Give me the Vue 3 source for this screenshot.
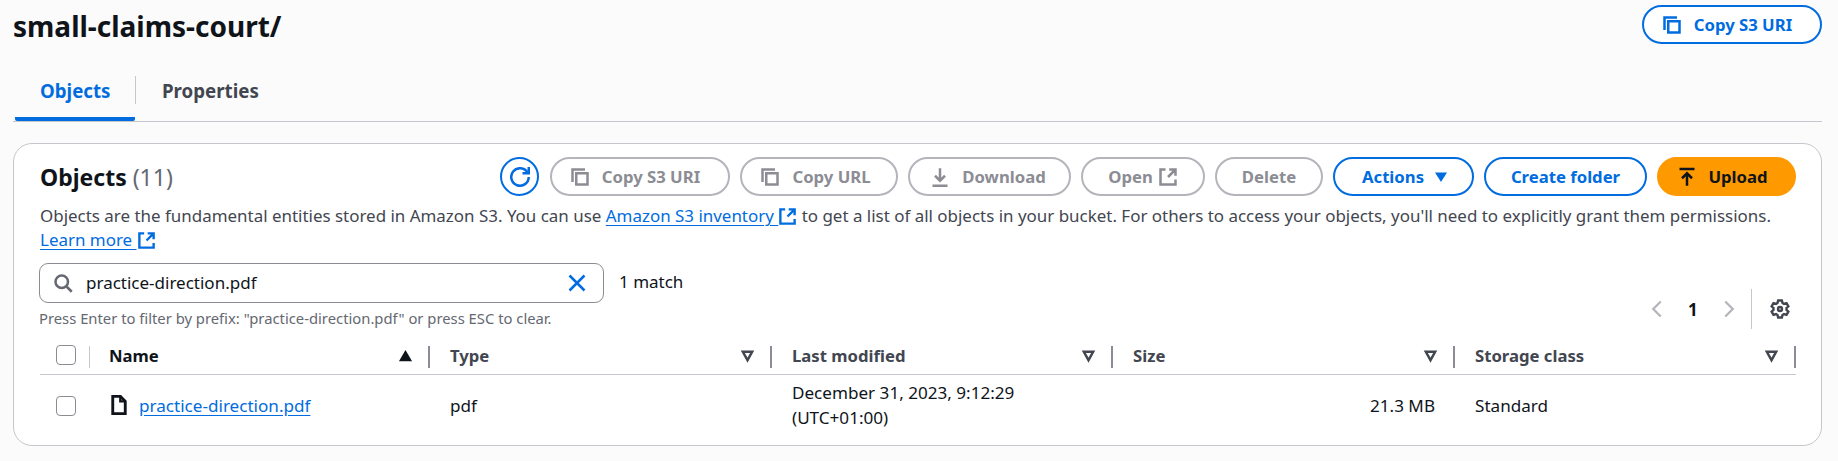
<script setup>
const columns = [
  { name: 'Name', sorted: true },
  { name: 'Type' },
  { name: 'Last modified' },
  { name: 'Size' },
  { name: 'Storage class' }
]
</script>

<template>
  <div class="page">
    <header class="top">
      <h1 class="title">small-claims-court/</h1>
      <button class="btn primary-outline top-copy s3">
        <svg class="ic" viewBox="0 0 16 16"><path d="M2 12V2h10" /><rect x="5" y="5" width="9" height="9" /></svg>
        Copy S3 URI
      </button>
    </header>

    <nav class="tabs">
      <div class="tab active"><span>Objects</span></div>
      <div class="tab"><span>Properties</span></div>
    </nav>

    <section class="card">
      <div class="card-head">
        <h2 class="heading">Objects <span class="count">(11)</span></h2>
        <div class="actions">
          <button class="btn primary-outline round">
            <svg class="ic" viewBox="0 0 16 16"><path d="M10 5h5V0" /><path d="M15 8a7 7 0 1 1-1.1-3.8L15 5" /></svg>
          </button>
          <button class="btn disabled w180 s3">
            <svg class="ic" viewBox="0 0 16 16"><path d="M2 12V2h10" /><rect x="5" y="5" width="9" height="9" /></svg>
            Copy S3 URI
          </button>
          <button class="btn disabled w158 url">
            <svg class="ic" viewBox="0 0 16 16"><path d="M2 12V2h10" /><rect x="5" y="5" width="9" height="9" /></svg>
            Copy URL
          </button>
          <button class="btn disabled w163 dl">
            <svg class="ic" viewBox="0 0 16 16"><path d="M8 1v10M4 7l4 4 4-4M2 15h12" /></svg>
            Download
          </button>
          <button class="btn disabled w124 tight">
            Open
            <svg class="ic" viewBox="0 0 16 16"><path d="M6 2H2v12h12v-4M9 2h5v5M14 2L8 8" /></svg>
          </button>
          <button class="btn disabled w108">Delete</button>
          <button class="btn primary-outline w141 act">
            Actions
            <svg class="caret" viewBox="0 0 16 16"><path d="M2 3.5h12L8 13z" /></svg>
          </button>
          <button class="btn primary-outline w163">Create folder</button>
          <button class="btn upload w139">
            <svg class="ic" viewBox="0 0 16 16"><path d="M2 1.5h12M8 15V5M4 9l4-4 4 4" /></svg>
            Upload
          </button>
        </div>
      </div>

      <p class="desc">
        Objects are the fundamental entities stored in Amazon S3. You can use
        <a class="link">Amazon S3 inventory&nbsp;</a><svg class="ic link-ic" viewBox="0 0 16 16"><path d="M6 2H2v12h12v-4M9 2h5v5M14 2L8 8" /></svg>
        to get a list of all objects in your bucket. For others to access your objects, you'll need to explicitly grant them permissions.
        <br />
        <a class="link">Learn more&nbsp;</a><svg class="ic link-ic" viewBox="0 0 16 16"><path d="M6 2H2v12h12v-4M9 2h5v5M14 2L8 8" /></svg>
      </p>

      <div class="filter-row">
        <div class="filter-left">
          <div class="search-line">
            <div class="search">
              <svg class="ic search-ic" viewBox="0 0 16 16"><circle cx="7" cy="7" r="5" /><path d="M11 11l4 4" /></svg>
              <span class="search-text">practice-direction.pdf</span>
              <svg class="ic clear-ic" viewBox="0 0 16 16"><path d="M2 2l12 12M14 2L2 14" /></svg>
            </div>
            <span class="match">1 match</span>
          </div>
          <div class="hint">Press Enter to filter by prefix: "practice-direction.pdf" or press ESC to clear.</div>
        </div>
        <div class="pager">
          <svg class="ic chev" viewBox="0 0 16 16"><path d="M11 2L5 8l6 6" /></svg>
          <span class="page-num">1</span>
          <svg class="ic chev" viewBox="0 0 16 16"><path d="M5 2l6 6-6 6" /></svg>
          <span class="pager-sep"></span>
          <svg class="ic gear" viewBox="0 0 16 16">
            <path d="M6.5 1.2h3l.5 2 1.2.7 2-.6 1.5 2.6-1.5 1.4v1.4l1.5 1.4-1.5 2.6-2-.6-1.2.7-.5 2h-3l-.5-2-1.2-.7-2 .6-1.5-2.6 1.5-1.4V7.3L1.3 5.9l1.5-2.6 2 .6L6 3.2z" />
            <circle cx="8" cy="8" r="1.6" />
          </svg>
        </div>
      </div>

      <div class="table">
        <div class="th check-cell">
          <span class="checkbox"></span>
          <span class="sep light"></span>
        </div>
        <div v-for="col in columns" :key="col.name" class="th" :class="{ strong: col.sorted }">
          <span>{{ col.name }}</span>
          <svg v-if="col.sorted" class="sort" viewBox="0 0 16 16"><path class="solid" d="M1 14L8 2l7 12z" /></svg>
          <svg v-else class="sort" viewBox="0 0 16 16"><path d="M3 4h10L8 13z" /></svg>
          <span class="sep"></span>
        </div>

        <div class="td check-cell"><span class="checkbox"></span></div>
        <div class="td name-cell">
          <svg class="ic file" viewBox="0 0 16 16"><path d="M9 1H3v14h10V5z" /><path class="fold" d="M9 1v4h4" /></svg>
          <a class="link">practice-direction.pdf</a>
        </div>
        <div class="td">pdf</div>
        <div class="td">December 31, 2023, 9:12:29<br />(UTC+01:00)</div>
        <div class="td right">21.3 MB</div>
        <div class="td">Standard</div>
      </div>
    </section>
  </div>
</template>

<style>
html, body { margin: 0; background: #fbfbfb; }
</style>

<style scoped>
.page {
  box-sizing: border-box;
  width: 1838px;
  height: 461px;
  padding: 0 16px 0 13px;
  font-family: "Noto Sans", sans-serif;
  font-size: 17px;
  color: #0f141a;
  overflow: hidden;
}
.top {
  display: flex;
  justify-content: space-between;
  align-items: flex-start;
  height: 76px;
}
.title {
  margin: 8px 0 0;
  font-size: 28px;
  line-height: 36px;
  font-weight: 700;
}
.btn {
  box-sizing: border-box;
  height: 39px;
  display: inline-flex;
  align-items: center;
  justify-content: center;
  gap: 10px;
  padding: 0;
  border-radius: 20px;
  border: 2px solid #006ce0;
  background: #fff;
  color: #006ce0;
  font-family: inherit;
  font-size: 16.7px;
  font-weight: 700;
}
.tight { gap: 5px; }
.s3 { gap: 12px; padding-right: 10px; }
.url { gap: 12px; padding-right: 7px; }
.dl { gap: 12px; padding-right: 3px; }
.act { padding-left: 4px; }
.top-copy { width: 180px; margin-top: 5px; }
.primary-outline { border-color: #006ce0; }
.round { width: 39px; border-radius: 50%; margin-right: 1px; }
.disabled { border-color: #b4b4bb; color: #8c8c94; }
.upload { background: #ff9900; border-color: #ff9900; color: #0f141a; padding-right: 8px; gap: 11px; }
.w180 { width: 180px; }
.w158 { width: 158px; }
.w163 { width: 163px; }
.w124 { width: 124px; }
.w108 { width: 108px; }
.w141 { width: 141px; }
.w139 { width: 139px; }

.ic {
  width: 20px;
  height: 20px;
  flex: none;
  fill: none;
  stroke: currentColor;
  stroke-width: 2;
}
.caret { width: 16px; height: 16px; fill: currentColor; margin-left: -1px; }

.tabs {
  display: flex;
  height: 45px;
  border-bottom: 1px solid #c6c6cd;
}
.tab {
  position: relative;
  box-sizing: border-box;
  padding: 0 26px 0 27px;
  font-weight: 700;
  font-size: 18.7px;
  line-height: 30px;
  color: #424650;
}
.tab span { display: block; }
.tab.active {
  color: #006ce0;
  width: 120px;
  margin-left: 2px;
  padding-left: 25px;
  border-bottom: 4px solid #006ce0;
  height: 45px;
  border-radius: 0 0 2px 2px;
}
.tab.active::after {
  content: "";
  position: absolute;
  right: -1px;
  top: 0;
  bottom: 13px;
  width: 1px;
  background: #c6c6cd;
}

.card {
  box-sizing: border-box;
  height: 303px;
  margin-top: 21px;
  padding: 13px 25px 0 26px;
  background: #fff;
  border: 1px solid #c6c6cd;
  border-radius: 19px;
}
.card-head {
  display: flex;
  justify-content: space-between;
  align-items: center;
}
.heading {
  margin: 0;
  font-size: 23px;
  font-weight: 700;
}
.count { font-weight: 400; color: #656871; }
.actions { display: flex; gap: 10px; }

.desc {
  margin: 8px 0 0;
  font-size: 16.95px;
  line-height: 24px;
  color: #424650;
}
.desc .ic { width: 19px; height: 19px; vertical-align: -4px; }
.link {
  color: #006ce0;
  text-decoration: underline;
  text-underline-offset: 3px;
}
.link-ic { color: #006ce0; }

.filter-row {
  display: flex;
  justify-content: space-between;
  margin-top: 11px;
}
.search-line { display: flex; align-items: center; gap: 15px; margin-left: -1px; }
.search {
  box-sizing: border-box;
  width: 565px;
  height: 40px;
  display: flex;
  align-items: center;
  padding: 0 16px 0 13px;
  border: 1px solid #8c8c94;
  border-radius: 9px;
}
.search-ic { color: #656871; }
.search-text { flex: 1; margin: 0 0 2px 13px; }
.clear-ic { color: #006ce0; }
.match { color: #0f141a; margin-bottom: 3px; }
.hint { margin: 5px 0 0 -1px; font-size: 14.8px; line-height: 20px; color: #656871; }

.pager {
  display: flex;
  align-items: center;
  height: 40px;
  margin: 26px 6px 0 0;
}
.chev { width: 20px; height: 20px; stroke-width: 1.8; color: #b4b4bb; }
.page-num { width: 10px; margin: 0 21px; font-weight: 700; }
.pager-sep { width: 1px; height: 40px; background: #c6c6cd; margin: 0 18px 0 12px; }
.gear { color: #424650; width: 20px; height: 20px; stroke-width: 1.9; }

.table {
  display: grid;
  grid-template-columns: 50px 340px 342px 341px 342px 341px;
  grid-template-rows: 39px 62px;
  margin-top: 7px;
}
.th {
  position: relative;
  display: flex;
  align-items: center;
  justify-content: space-between;
  padding: 0 17px 0 20px;
  border-bottom: 1px solid #c6c6cd;
  font-size: 16.7px;
  font-weight: 700;
  color: #424650;
}
.th.strong { color: #0f141a; padding-left: 19px; }
.th.check-cell { padding: 0 0 0 16px; justify-content: flex-start; }
.checkbox {
  box-sizing: border-box;
  width: 20px;
  height: 20px;
  border: 1px solid #8c8c94;
  border-radius: 4px;
}
.sep {
  position: absolute;
  right: 0;
  top: 10px;
  bottom: 6px;
  width: 2px;
  background: #8c8c94;
}
.sep.light { background: #c6c6cd; width: 1px; }
.sort {
  width: 15px;
  height: 15px;
  fill: none;
  stroke: #424650;
  stroke-width: 2.6;
}
.sort .solid { fill: #0f141a; stroke: none; }
.td {
  display: flex;
  flex-direction: column;
  justify-content: center;
  padding: 0 20px 2px;
  font-size: 17.1px;
  line-height: 25px;
}
.td.check-cell { padding: 0 0 0 16px; flex-direction: row; align-items: center; justify-content: flex-start; }
.name-cell { flex-direction: row; align-items: center; justify-content: flex-start; gap: 10px; padding-left: 19px; }
.file { width: 20px; height: 20px; stroke-width: 2.3; }
.fold { stroke-width: 1.8; }
.right { text-align: right; }
</style>
